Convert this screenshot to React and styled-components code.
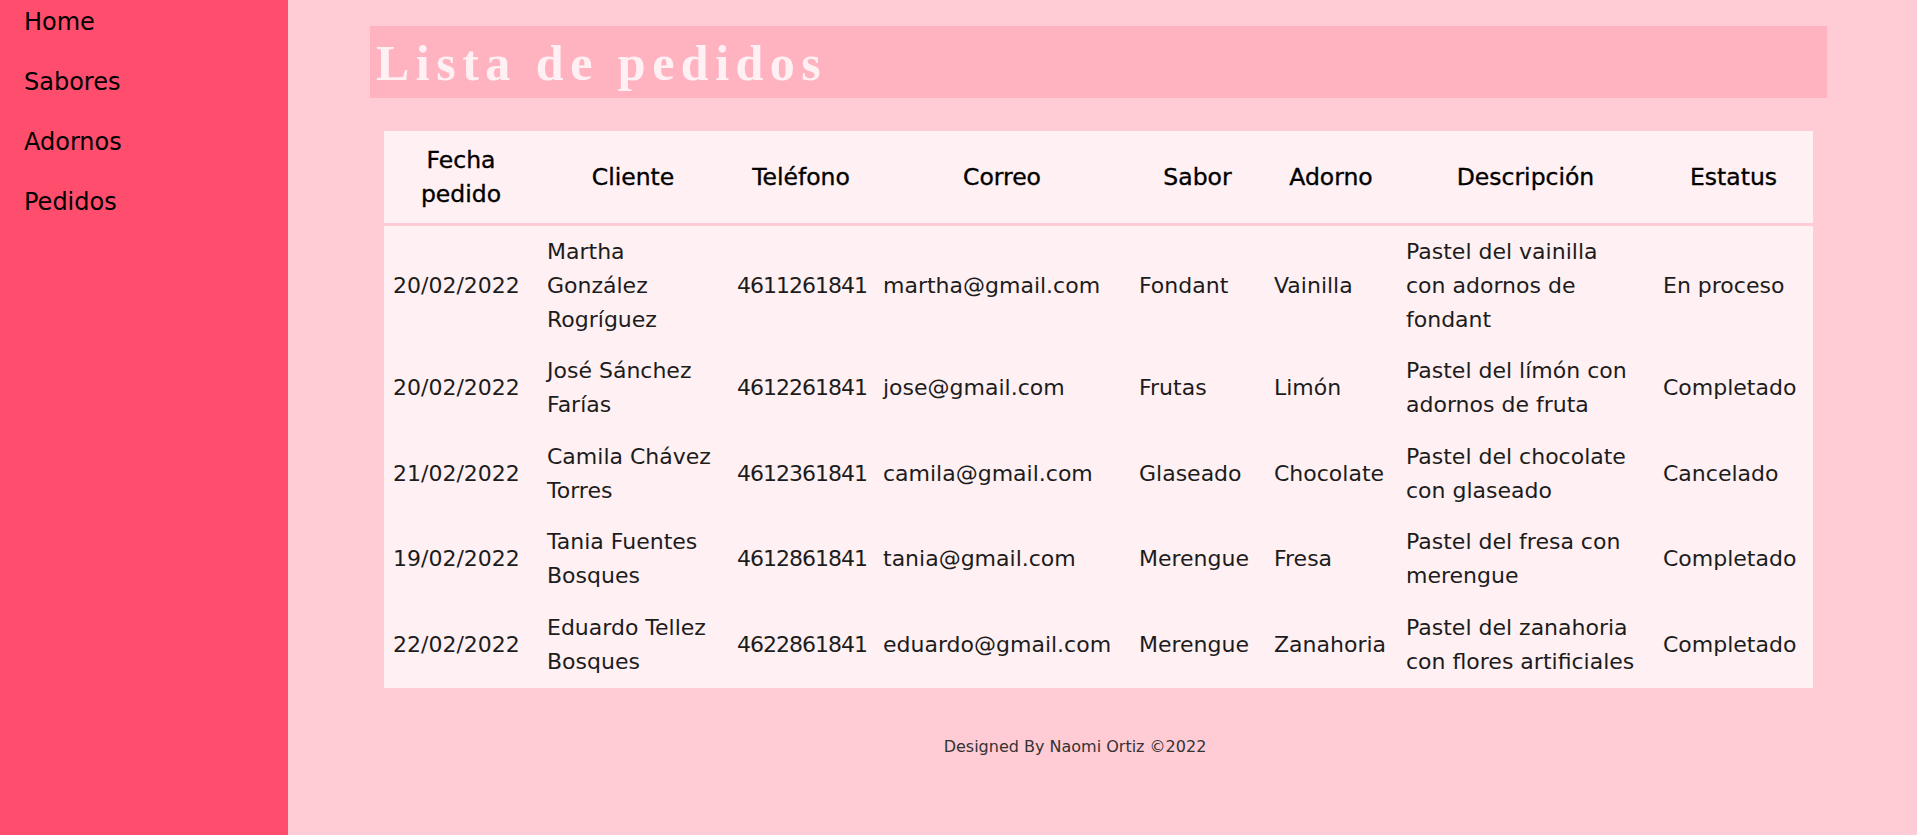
import styled, { createGlobalStyle } from "styled-components";

const GlobalStyle = createGlobalStyle`
  html, body {
    margin: 0;
    padding: 0;
    background: #ffccd5;
  }
  body {
    font-family: "DejaVu Sans", "Liberation Sans", sans-serif;
    color: #1c1c1c;
  }
`;

const Layout = styled.div`
  display: flex;
  min-height: 100vh;
`;

const SideBar = styled.nav`
  width: 288px;
  flex-shrink: 0;
  background: #ff4d6d;
  padding: 7px 24px 0;
  box-sizing: border-box;
  display: flex;
  flex-direction: column;
  gap: 30px;
`;

const NavLink = styled.a`
  display: block;
  font-size: 24px;
  line-height: 30px;
  color: #000;
  text-decoration: none;
`;

const Main = styled.main`
  flex: 1;
  background: #ffccd5;
  padding: 26px 90px 0 82px;
  display: flex;
  flex-direction: column;
`;

const Title = styled.h1`
  margin: 0;
  height: 72px;
  box-sizing: border-box;
  padding: 3px 6px 0;
  background: #ffb3c1;
  color: #fff0f3;
  font-family: "Liberation Serif", serif;
  font-weight: 700;
  font-size: 50px;
  line-height: 69px;
  letter-spacing: 6.5px;
`;

const Table = styled.table`
  margin: 33px 14px 0;
  width: calc(100% - 28px);
  table-layout: fixed;
  border-collapse: collapse;
  background: #fff0f3;
  font-size: 22px;
  line-height: 34px;
`;

const HeadCell = styled.th`
  padding: 12px 9px;
  font-size: 23.5px;
  font-weight: 400;
  -webkit-text-stroke: 0.35px currentColor;
  color: #000;
  text-align: center;
  vertical-align: middle;
  border-bottom: 3px solid #ffccd5;
`;

const Cell = styled.td`
  padding: 8.75px 9px;
  vertical-align: middle;
  white-space: nowrap;
  letter-spacing: ${(p) => (p.$tight ? "-1px" : "normal")};
`;

const Footer = styled.footer`
  margin-top: 49px;
  padding-right: 47px;
  text-align: center;
  font-size: 16px;
  line-height: 19px;
  color: #333;
`;

const columns = [
  { label: "Fecha pedido", width: 154 },
  { label: "Cliente", width: 190 },
  { label: "Teléfono", width: 146 },
  { label: "Correo", width: 256 },
  { label: "Sabor", width: 135 },
  { label: "Adorno", width: 132 },
  { label: "Descripción", width: 257 },
  { label: "Estatus", width: 159 },
];

const pedidos = [
  {
    fecha: "20/02/2022",
    cliente: ["Martha", "González", "Rogríguez"],
    telefono: "4611261841",
    correo: "martha@gmail.com",
    sabor: "Fondant",
    adorno: "Vainilla",
    descripcion: ["Pastel del vainilla", "con adornos de", "fondant"],
    estatus: "En proceso",
  },
  {
    fecha: "20/02/2022",
    cliente: ["José Sánchez", "Farías"],
    telefono: "4612261841",
    correo: "jose@gmail.com",
    sabor: "Frutas",
    adorno: "Limón",
    descripcion: ["Pastel del límón con", "adornos de fruta"],
    estatus: "Completado",
  },
  {
    fecha: "21/02/2022",
    cliente: ["Camila Chávez", "Torres"],
    telefono: "4612361841",
    correo: "camila@gmail.com",
    sabor: "Glaseado",
    adorno: "Chocolate",
    descripcion: ["Pastel del chocolate", "con glaseado"],
    estatus: "Cancelado",
  },
  {
    fecha: "19/02/2022",
    cliente: ["Tania Fuentes", "Bosques"],
    telefono: "4612861841",
    correo: "tania@gmail.com",
    sabor: "Merengue",
    adorno: "Fresa",
    descripcion: ["Pastel del fresa con", "merengue"],
    estatus: "Completado",
  },
  {
    fecha: "22/02/2022",
    cliente: ["Eduardo Tellez", "Bosques"],
    telefono: "4622861841",
    correo: "eduardo@gmail.com",
    sabor: "Merengue",
    adorno: "Zanahoria",
    descripcion: ["Pastel del zanahoria", "con flores artificiales"],
    estatus: "Completado",
  },
];

// renders an array of lines with explicit breaks
function Lines({ lines }) {
  return lines.map((line, i) => (
    <span key={i}>
      {i > 0 && <br />}
      {line}
    </span>
  ));
}

function App() {
  return (
    <>
      <GlobalStyle />
      <Layout>
        <SideBar>
          <NavLink href="#">Home</NavLink>
          <NavLink href="#">Sabores</NavLink>
          <NavLink href="#">Adornos</NavLink>
          <NavLink href="#">Pedidos</NavLink>
        </SideBar>
        <Main>
          <Title>Lista de pedidos</Title>
          <Table>
            <colgroup>
              {columns.map((c) => (
                <col key={c.label} style={{ width: c.width }} />
              ))}
            </colgroup>
            <thead>
              <tr>
                {columns.map((c) => (
                  <HeadCell key={c.label}>{c.label}</HeadCell>
                ))}
              </tr>
            </thead>
            <tbody>
              {pedidos.map((p, i) => (
                <tr key={i}>
                  <Cell>{p.fecha}</Cell>
                  <Cell>
                    <Lines lines={p.cliente} />
                  </Cell>
                  <Cell $tight>{p.telefono}</Cell>
                  <Cell>{p.correo}</Cell>
                  <Cell>{p.sabor}</Cell>
                  <Cell>{p.adorno}</Cell>
                  <Cell>
                    <Lines lines={p.descripcion} />
                  </Cell>
                  <Cell>{p.estatus}</Cell>
                </tr>
              ))}
            </tbody>
          </Table>
          <Footer>Designed By Naomi Ortiz ©2022</Footer>
        </Main>
      </Layout>
    </>
  );
}

export default App;
